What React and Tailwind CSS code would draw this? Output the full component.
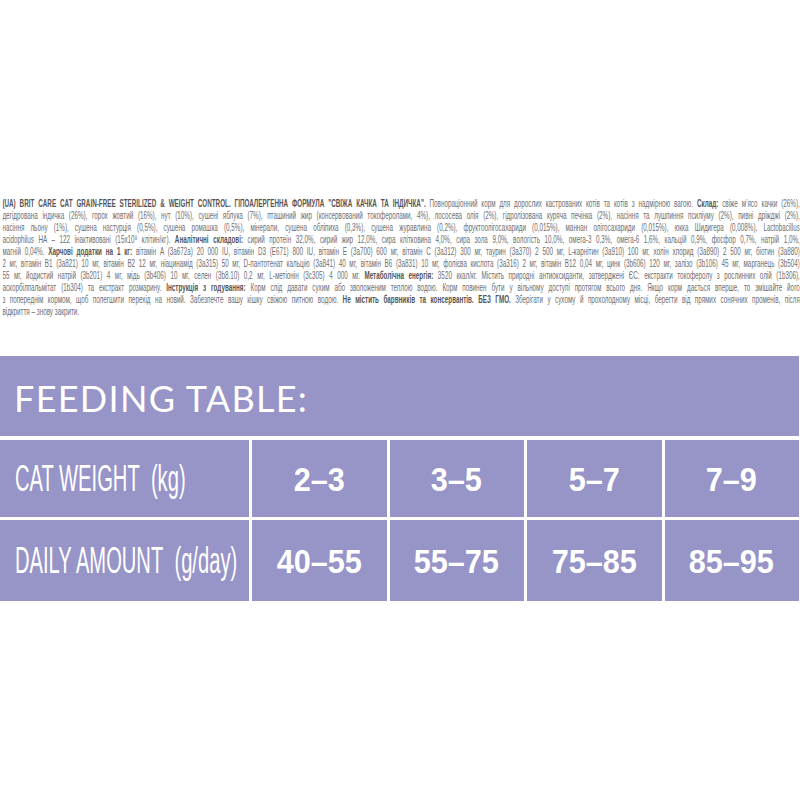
const lines = [
  [
    { b: "(UA) BRIT CARE CAT GRAIN-FREE STERILIZED & WEIGHT CONTROL. ГІПОАЛЕРГЕННА ФОРМУЛА \"СВІЖА КАЧКА ТА ІНДИЧКА\"." },
    " Повнораціонний корм для дорослих кастрованих котів та котів з надмірною вагою. ",
    { b: "Склад:" },
    " свіже м’ясо качки (26%),",
  ],
  [
    "дегідрована індичка (26%), горох жовтий (16%), нут (10%), сушені яблука (7%), пташиний жир (консервований токоферолами, 4%), лососева олія (2%), гідролізована куряча печінка (2%), насіння та лушпиння псиліуму (2%), пивні дріжджі (2%),",
  ],
  [
    "насіння льону (1%), сушена настурція (0,5%), сушена ромашка (0,5%), мінерали, сушена обліпиха (0,3%), сушена журавлина (0,2%), фруктоолігосахариди (0,015%), маннан олігосахариди (0,015%), юкка Шидигера (0,008%), Lactobacillus",
  ],
  [
    "acidophilus HA – 122 інактивовані (15x10⁹ клітин/кг). ",
    { b: "Аналітичні складові:" },
    " сирий протеїн 32,0%, сирий жир 12,0%, сира клітковина 4,0%, сира зола 9,0%, вологість 10,0%, омега-3 0,3%, омега-6 1,6%, кальцій 0,9%, фосфор 0,7%, натрій 1,0%,",
  ],
  [
    "магній 0,04%. ",
    { b: "Харчові додатки на 1 кг:" },
    " вітамін A (3a672a) 20 000 IU, вітамін D3 (E671) 800 IU, вітамін E (3a700) 600 мг, вітамін C (3a312) 300 мг, таурин (3a370) 2 500 мг, L-карнітин (3a910) 100 мг, холін хлорид (3a890) 2 500 мг, біотин (3a880)",
  ],
  [
    "2 мг, вітамін B1 (3a821) 10 мг, вітамін B2 12 мг, ніацинамід (3a315) 50 мг, D-пантотенат кальцію (3a841) 40 мг, вітамін B6 (3a831) 10 мг, фолієва кислота (3a316) 2 мг, вітамін B12 0,04 мг, цинк (3b606) 120 мг, залізо (3b106) 45 мг, марганець (3b504)",
  ],
  [
    "55 мг, йодистий натрій (3b201) 4 мг, мідь (3b406) 10 мг, селен (3b8.10) 0,2 мг, L-метіонін (3c305) 4 000 мг. ",
    { b: "Метаболічна енергія:" },
    " 3520 ккал/кг. Містить природні антиоксиданти, затверджені ЄС: екстракти токоферолу з рослинних олій (1b306),",
  ],
  [
    "аскорбілпальмітат (1b304) та екстракт розмарину. ",
    { b: "Інструкція з годування:" },
    " Корм слід давати сухим або зволоженим теплою водою. Корм повинен бути у вільному доступі протягом всього дня. Якщо корм дається вперше, то змішайте його",
  ],
  [
    "з попереднім кормом, щоб полегшити перехід на новий. Забезпечте вашу кішку свіжою питною водою. ",
    { b: "Не містить барвників та консервантів. БЕЗ ГМО." },
    " Зберігати у сухому й прохолодному місці, берегти від прямих сонячних променів, після",
  ],
];

const weights = ["2–3", "3–5", "5–7", "7–9"];
const amounts = ["40–55", "55–75", "75–85", "85–95"];

function Line({ parts, last }) {
  return (
    <div
      className={
        "h-[12px] overflow-hidden " +
        (last ? "text-left" : "text-justify [text-align-last:justify]")
      }
    >
      {parts.map((p, i) =>
        typeof p === "string" ? (
          <span key={i}>{p}</span>
        ) : (
          <span key={i} className="font-bold text-[#545456]">
            {p.b}
          </span>
        )
      )}
    </div>
  );
}

function Label({ children }) {
  return (
    <div className="flex items-center bg-[#9794c8] pl-[15px]">
      <span className="block origin-left scale-x-[0.56] whitespace-nowrap text-[36px] leading-none text-white">
        {children}
      </span>
    </div>
  );
}

function Value({ children }) {
  return (
    <div className="flex items-center justify-center bg-[#9794c8]">
      <span className="block scale-x-[0.9] whitespace-nowrap text-[34px] font-bold leading-none text-white">
        {children}
      </span>
    </div>
  );
}

export default function App() {
  return (
    <div className="h-[800px] w-[800px] overflow-hidden bg-white pt-[198px] font-['Liberation_Sans',Arial,sans-serif]">
      <div className="w-full overflow-hidden">
        <div className="w-[1333px] origin-left scale-x-[0.6] pl-[4px] text-[10.5px] leading-[11.8px] text-[#6e6e71]">
          {lines.map((l, i) => (
            <Line key={i} parts={l} />
          ))}
          <Line parts={["відкриття – знову закрити."]} last />
        </div>
      </div>

      <div className="mt-[38px] w-[799px] bg-white">
        <div className="flex h-[80px] items-center bg-[#9794c8] pl-[14px] pt-[3px]">
          <span className="font-['Lato',sans-serif] text-[36px] leading-none tracking-[1.3px] text-white">
            FEEDING TABLE:
          </span>
        </div>
        <div className="mt-[4px] grid grid-cols-[249px_1fr_1fr_1fr_1fr] grid-rows-[77px_81px] gap-[3px]">
          <Label>CAT WEIGHT&nbsp; (kg)</Label>
          {weights.map((w) => (
            <Value key={w}>{w}</Value>
          ))}
          <Label>DAILY AMOUNT&nbsp; (g/day)</Label>
          {amounts.map((a) => (
            <Value key={a}>{a}</Value>
          ))}
        </div>
      </div>
    </div>
  );
}
